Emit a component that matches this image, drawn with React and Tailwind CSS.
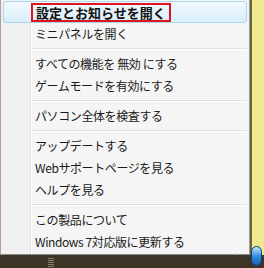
const groups = [
  ['設定とお知らせを開く', 'ミニパネルを開く'],
  ['すべての機能を 無効 にする', 'ゲームモードを有効にする'],
  ['パソコン全体を検査する'],
  ['アップデートする', 'Webサポートページを見る', 'ヘルプを見る'],
  ['この製品について', 'Windows 7対応版に更新する'],
]

function Item({ label, first }) {
  if (first) {
    return (
      <div className="mx-[2px] h-[22px] flex items-center rounded-[3px] border border-[#a8d8eb] bg-gradient-to-b from-[#f2f9fd] to-[#d9eff9]">
        <div className="ml-[27px] h-[19px] px-[3px] flex items-center border-2 border-[#e0141e] text-[13px] tracking-normal font-bold text-[#111]">
          {label}
        </div>
      </div>
    )
  }
  return (
    <div className="h-[22px] flex items-center pl-[34px] pb-[1px] text-[#1a1a1a]">{label}</div>
  )
}

export default function App() {
  return (
    <div
      className="w-[264px] h-[268px] flex flex-col overflow-hidden bg-[#3b3427] text-[12px] tracking-[-0.4px] leading-none"
      style={{ fontFamily: '"Noto Sans CJK JP", "Noto Sans", sans-serif' }}
    >
      <div className="flex h-[255px]">
        {/* メニュー本体 */}
        <div className="relative w-[250px] border-l border-l-[#b99a98] border-r border-r-[#9a9a9a] border-b border-b-[#8a8a8a] bg-[#f5f5f5] pt-[1px]">
          <div className="absolute left-0 top-0 bottom-0 w-[30px] bg-[#f0f0f0] border-r border-r-[#e2e3e3]">
            <div className="absolute right-[-2px] top-0 bottom-0 w-px bg-white" />
          </div>
          <div className="relative">
            {groups.map((g, gi) => (
              <div key={gi}>
                {gi > 0 && (
                  <div className="ml-[31px] mr-[2px] h-[8px] flex flex-col justify-center">
                    <div className="h-px bg-[#e0e0e0]" />
                    <div className="h-px bg-white" />
                  </div>
                )}
                {g.map((label, i) => (
                  <Item key={label} label={label} first={gi === 0 && i === 0} />
                ))}
              </div>
            ))}
          </div>
        </div>
        {/* 右側の背景 */}
        <div className="flex-1 flex">
          <div className="w-[2px] bg-[#6b6440]" />
          <div className="flex-1 bg-[#eee88e]" />
        </div>
      </div>
      <div className="relative flex-1">
        <div className="absolute left-[48px] top-[2px] w-[6px] h-[10px] bg-[repeating-linear-gradient(0deg,#8a7f66_0,#8a7f66_1px,transparent_1px,transparent_2px)]" />
        <div className="absolute right-[2px] top-[-9px] w-[11px] h-[20px] rounded-full bg-gradient-to-b from-[#bfe6ff] via-[#2f8fe0] to-[#1d5fb0] border border-[#0d3c78]" />
        <div className="absolute left-[234px] top-[-6px] text-[8px] text-[#cfcfcf]">‹</div>
      </div>
    </div>
  )
}
